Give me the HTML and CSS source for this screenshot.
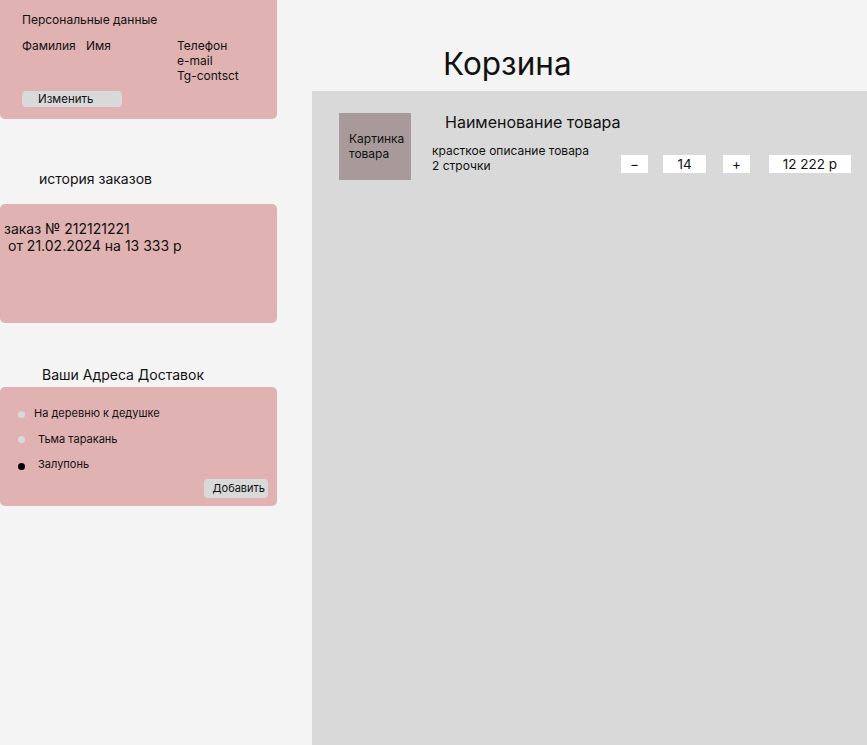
FILE: index.html
```html
<!DOCTYPE html>
<html lang="ru">
<head>
<meta charset="utf-8">
<title>Корзина</title>
<link rel="stylesheet" href="styles.css">
</head>
<body>
<div class="page">
  <aside class="side">
    <section class="card card-personal">
      <div class="card-title">Персональные данные</div>
      <div class="fields">
        <div class="f-last">Фамилия</div>
        <div class="f-first">Имя</div>
        <div class="f-contacts">
          <div>Телефон</div>
          <div>e-mail</div>
          <div>Tg-contsct</div>
        </div>
      </div>
      <button class="btn btn-edit">Изменить</button>
    </section>

    <h2 class="side-heading h-history">история заказов</h2>
    <section class="card card-history">
      <div class="order">заказ № 212121221</div>
      <div class="order order-2">от 21.02.2024 на 13 333 р</div>
    </section>

    <h2 class="side-heading h-address">Ваши Адреса Доставок</h2>
    <section class="card card-address">
      <ul class="addr-list">
        <li class="addr"><span class="dot"></span><span class="addr-text first">На деревню к дедушке</span></li>
        <li class="addr"><span class="dot"></span><span class="addr-text">Тьма таракань</span></li>
        <li class="addr"><span class="dot dot-on"></span><span class="addr-text">Залупонь</span></li>
      </ul>
      <div class="addr-actions"><button class="btn btn-add">Добавить</button></div>
    </section>
  </aside>

  <main class="main">
    <header class="main-head"><h1 class="title">Корзина</h1></header>
    <div class="panel">
      <div class="item">
        <div class="thumb">Картинка товара</div>
        <div class="info">
          <div class="name">Наименование товара</div>
          <div class="info-row">
            <div class="desc">красткое описание товара<br>2 строчки</div>
            <div class="controls">
              <div class="box box-minus">−</div>
              <div class="box box-qty">14</div>
              <div class="box box-plus">+</div>
              <div class="box box-price">12 222 р</div>
            </div>
          </div>
        </div>
      </div>
    </div>
  </main>
</div>
</body>
</html>
```

FILE: styles.css
```css
* { box-sizing: border-box; }
html, body { margin: 0; padding: 0; }
body {
  background: #f4f4f4;
  font-family: Inter, "Noto Sans", sans-serif;
  color: #111;
  width: 867px;
  height: 745px;
  overflow: hidden;
}
.page {
  display: flex;
  gap: 35px;
  height: 745px;
}
.side {
  width: 277px;
  flex: none;
  display: flex;
  flex-direction: column;
}
.card {
  background: #e0b2b2;
  border-radius: 5px;
}
.card-personal {
  border-radius: 0 0 5px 5px;
  height: 119px;
  padding: 12px 0 0 22px;
  font-size: 12px;
  line-height: 15px;
}
.card-title { height: 16px; }
.fields {
  display: flex;
  margin-top: 10px;
}
.f-last { width: 64px; }
.f-first { width: 91px; }
.btn {
  font-family: inherit;
  border: none;
  background: #d9d9d9;
  color: #111;
  border-radius: 4px;
  padding: 0;
  cursor: pointer;
}
.btn-edit {
  display: block;
  margin-top: 8px;
  width: 100px;
  height: 16px;
  font-size: 11.5px;
  line-height: 16px;
  text-align: left;
  padding-left: 16px;
}
.side-heading {
  margin: 0;
  font-weight: normal;
  font-size: 14px;
  line-height: 17px;
}
.h-history { margin-top: 51px; padding-left: 39px; }
.card-history {
  margin-top: 17px;
  height: 119px;
  padding: 16px 0 0 4px;
  font-size: 14px;
  line-height: 17px;
}
.order-2 { padding-left: 4px; }
.h-address { margin-top: 43px; padding-left: 42px; }
.card-address {
  margin-top: 4px;
  height: 119px;
  padding: 19px 9px 0 18px;
  font-size: 11px;
  line-height: 14px;
  display: flex;
  flex-direction: column;
}
.addr-list {
  list-style: none;
  margin: 0;
  padding: 0;
  display: flex;
  flex-direction: column;
  gap: 11.5px;
}
.addr {
  display: flex;
  align-items: center;
  height: 14px;
}
.dot {
  width: 7px;
  height: 7px;
  border-radius: 50%;
  background: #d9d9d9;
  margin-top: 2px;
}
.dot-on { background: #000; margin-top: 4px; }
.addr-text { margin-left: 13px; }
.addr-text.first { margin-left: 9px; }
.addr-actions {
  display: flex;
  justify-content: flex-end;
  margin-top: 8px;
}
.btn-add {
  width: 64px;
  height: 19px;
  font-size: 11px;
  line-height: 19px;
  text-align: right;
  padding-right: 3px;
}
.main {
  flex: 1;
  display: flex;
  flex-direction: column;
}
.main-head {
  height: 91px;
  display: flex;
  align-items: flex-end;
}
.title {
  margin: 0 0 7px 131px;
  font-weight: normal;
  font-size: 31.5px;
  line-height: 40px;
}
.panel {
  flex: 1;
  background: #d9d9d9;
  padding: 22px 0 0 27px;
}
.item {
  display: flex;
}
.thumb {
  width: 72px;
  height: 67px;
  background: #a89a9a;
  font-size: 12px;
  line-height: 15px;
  padding: 18px 0 0 10px;
  flex: none;
}
.info {
  margin-left: 21px;
  flex: 1;
}
.name {
  font-size: 16px;
  line-height: 18px;
  margin-left: 13px;
}
.info-row {
  display: flex;
  margin-top: 12px;
}
.desc {
  font-size: 12px;
  line-height: 15px;
  width: 189px;
}
.controls {
  display: flex;
  margin-top: 12px;
  font-size: 13.5px;
  line-height: 18px;
}
.box {
  background: #fff;
  height: 18px;
  text-align: center;
}
.box-minus { width: 27px; }
.box-qty { width: 43px; margin-left: 15px; }
.box-plus { width: 27px; margin-left: 17px; }
.box-price { width: 82px; margin-left: 19px; }
```
